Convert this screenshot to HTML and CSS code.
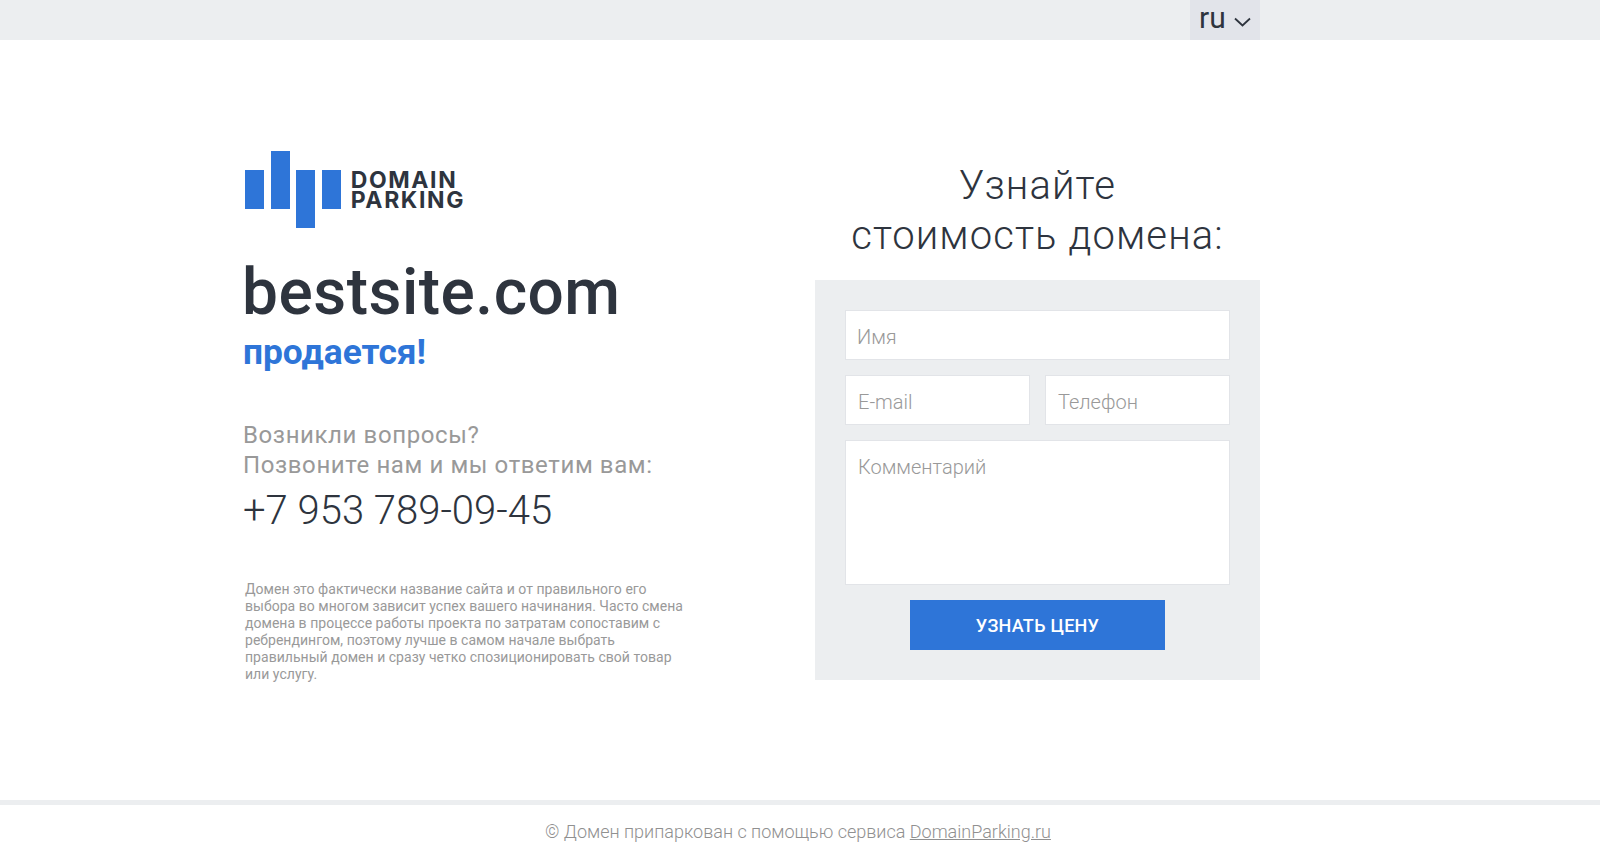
FILE: index.html
```html
<!DOCTYPE html>
<html lang="ru">
    <head>
        <meta charset="UTF-8">
        <link rel="stylesheet" href="styles.css">
        <title>bestsite.com продается!</title>
    </head>
    <body>
        <div class="topbar">
            <div class="container topbar-inner">
                <div class="lang">
                    <span>ru</span>
                    <svg class="lang-arrow" width="17" height="10" viewBox="0 0 17 10"><path d="M1 1.500l7.500 7 7.500-7" fill="none" stroke="#2e343e" stroke-width="1.8"/></svg>
                </div>
            </div>
        </div>
        <div class="container main">
            <div class="left">
                <div class="logo">
                    <div class="bars">
                        <i class="bar bar-a"></i>
                        <i class="bar bar-b"></i>
                        <i class="bar bar-c"></i>
                        <i class="bar bar-a"></i>
                    </div>
                    <div class="logo-text">DOMAIN<br>PARKING</div>
                </div>
                <h1 class="domain">bestsite.com</h1>
                <div class="sale">продается!</div>
                <p class="question">Возникли вопросы?<br>Позвоните нам и мы ответим вам:</p>
                <div class="phone">+7 953 789-09-45</div>
                <p class="about">Домен это фактически название сайта и от правильного его выбора во многом зависит успех вашего начинания. Часто смена домена в процессе работы проекта по затратам сопоставим с ребрендингом, поэтому лучше в самом начале выбрать правильный домен и сразу четко спозиционировать свой товар или услугу.</p>
            </div>
            <div class="right">
                <h2 class="form-title">Узнайте<br>стоимость домена:</h2>
                <form class="form">
                    <input class="field field-name" placeholder="Имя">
                    <div class="form-row">
                        <input class="field" placeholder="E-mail">
                        <input class="field" placeholder="Телефон">
                    </div>
                    <textarea class="field comment" placeholder="Комментарий"></textarea>
                    <button class="submit" type="button">УЗНАТЬ ЦЕНУ</button>
                </form>
            </div>
        </div>
        <div class="footer">© Домен припаркован с помощью сервиса <a href="#">DomainParking.ru</a></div>
    </body>
</html>
```

FILE: styles.css
```css
* {
    box-sizing: border-box;
}

body {
    margin: 0;
    font-family: Roboto, "Liberation Sans", sans-serif;
    background: #fff;
    color: #2e343e;
}

.container {
    width: 1020px;
    margin-left: 240px;
}

.topbar {
    height: 40px;
    background: #eceef0;
}

.topbar-inner {
    display: flex;
    justify-content: flex-end;
}

.lang {
    display: flex;
    align-items: center;
    gap: 8px;
    width: 70px;
    height: 40px;
    padding: 0 9px;
    background: #e2e4ea;
    font-size: 30px;
    line-height: 36px;
}

.lang span {
    margin-top: -4px;
}

.lang-arrow {
    margin-top: 3px;
}

.main {
    display: flex;
    justify-content: space-between;
    height: 760px;
    padding-top: 111px;
}

.left {
    width: 450px;
    padding-left: 3px;
}

.logo {
    display: flex;
    align-items: center;
    gap: 10px;
    margin-left: 2px;
    height: 77px;
}

.bars {
    display: flex;
    gap: 6.6px;
    height: 77px;
}

.bar {
    display: block;
    width: 19px;
    background: #2e75d8;
}

.bar-a {
    height: 39px;
    margin-top: 19px;
}

.bar-b {
    height: 58px;
}

.bar-c {
    height: 58px;
    margin-top: 19px;
}

.logo-text {
    font-family: Inter, "Liberation Sans", sans-serif;
    font-size: 23px;
    line-height: 20px;
    font-weight: 700;
    letter-spacing: 1.6px;
    color: #2e343e;
}

.domain {
    margin: 30px 0 0 -1px;
    font-size: 64px;
    line-height: 70px;
    font-weight: 500;
    letter-spacing: 0.5px;
    color: #2e343e;
}

.sale {
    margin-top: 2px;
    font-size: 35.3px;
    line-height: 44px;
    font-weight: 700;
    color: #2e75d8;
}

.question {
    margin: 46px 0 0;
    font-size: 24px;
    line-height: 30px;
    letter-spacing: 0.6px;
    color: #999;
}

.phone {
    margin-top: 6px;
    font-size: 40px;
    line-height: 50px;
    font-weight: 300;
    color: #2e343e;
}

.about {
    margin: 45px 0 0 2px;
    width: 445px;
    font-size: 14px;
    line-height: 17px;
    letter-spacing: 0.03px;
    color: #999;
}

.right {
    width: 445px;
}

.form-title {
    margin: 10px 0 0;
    height: 119px;
    text-align: center;
    font-size: 40px;
    line-height: 50px;
    font-weight: 300;
    letter-spacing: 1.1px;
    color: #2e343e;
}

.form {
    display: flex;
    flex-direction: column;
    align-items: center;
    gap: 15px;
    height: 400px;
    padding: 30px;
    background: #eceef0;
}

.form-row {
    display: flex;
    justify-content: space-between;
    width: 100%;
}

.field {
    display: block;
    width: 100%;
    height: 50px;
    padding: 3px 12px 0;
    border: 1px solid #e2e4e8;
    border-radius: 0;
    background: #fff;
    outline: none;
    font-family: Roboto, "Liberation Sans", sans-serif;
    font-size: 20px;
    font-weight: 300;
    color: #2e343e;
}

.field::placeholder {
    color: #999;
    opacity: 1;
}

.field-name {
    padding-left: 11px;
}

.form-row .field {
    width: 185px;
}

.comment {
    height: 145px;
    padding-top: 14px;
    resize: none;
}

.submit {
    width: 255px;
    height: 50px;
    border: 0;
    background: #2e75d8;
    color: #fff;
    font-family: Roboto, "Liberation Sans", sans-serif;
    font-size: 18px;
    font-weight: 500;
    letter-spacing: 0.25px;
}

.footer {
    height: 60px;
    border-top: 5px solid #eceef0;
    padding: 15px 4px 0 0;
    text-align: center;
    font-size: 18px;
    line-height: 24px;
    font-weight: 300;
    color: #909090;
}

.footer a {
    color: #909090;
}
```
